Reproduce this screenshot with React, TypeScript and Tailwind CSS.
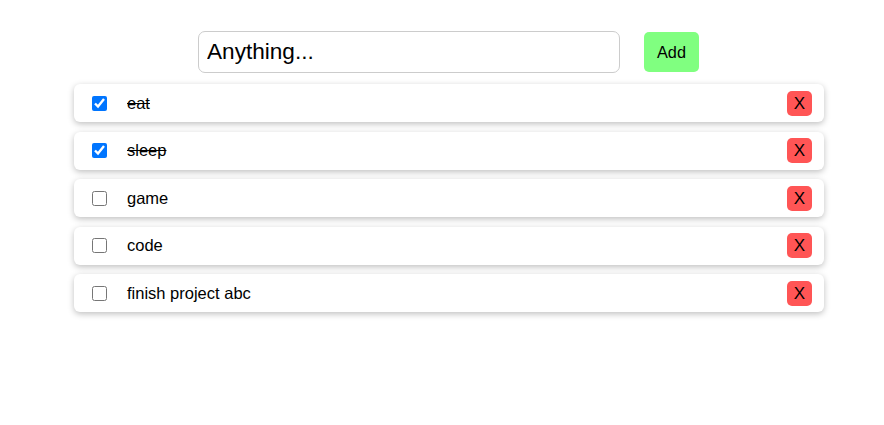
import { useState } from "react";

type Todo = { id: number; text: string; done: boolean };

const initialTodos: Todo[] = [
  { id: 1, text: "eat", done: true },
  { id: 2, text: "sleep", done: true },
  { id: 3, text: "game", done: false },
  { id: 4, text: "code", done: false },
  { id: 5, text: "finish project abc", done: false },
];

export default function App() {
  const [todos, setTodos] = useState<Todo[]>(initialTodos);
  const [value, setValue] = useState("");

  const toggle = (id: number) =>
    setTodos(todos.map((t) => (t.id === id ? { ...t, done: !t.done } : t)));

  const remove = (id: number) => setTodos(todos.filter((t) => t.id !== id));

  const add = () => {
    if (!value.trim()) return;
    setTodos([...todos, { id: Date.now(), text: value, done: false }]);
    setValue("");
  };

  return (
    <div className="min-h-[425px] bg-white font-['Liberation_Sans',Arial,sans-serif] text-black">
      <div className="ml-[74px] w-[750px] pt-[31px]">
        <div className="flex items-center gap-[24px] pl-[124px]">
          <input
            className="h-[42px] w-[422px] rounded-[7px] border border-[#cccccc] px-[8px] text-[22.6px] text-black placeholder:text-black outline-none"
            placeholder="Anything..."
            value={value}
            onChange={(e) => setValue(e.target.value)}
          />
          <button
            className="h-[40px] w-[55px] rounded-[5px] bg-[#80ff80] text-[16.3px]"
            onClick={add}
          >
            Add
          </button>
        </div>
        <ul className="mt-[11px] flex flex-col gap-[9.5px]">
          {todos.map((todo) => (
            <li
              key={todo.id}
              className="flex h-[38px] items-center rounded-[6px] bg-white pl-[18px] pr-[12px] shadow-[0_2px_6px_rgba(0,0,0,0.25)]"
            >
              <input
                type="checkbox"
                checked={todo.done}
                onChange={() => toggle(todo.id)}
                className="m-0 h-[15px] w-[15px] accent-[#0075ff]"
              />
              <span
                className={`ml-[20px] flex-1 text-[16.5px] ${todo.done ? "line-through" : ""}`}
              >
                {todo.text}
              </span>
              <button
                className="flex h-[25px] w-[25px] items-center justify-center rounded-[5px] bg-[#ff5555] text-[17px] leading-none"
                onClick={() => remove(todo.id)}
              >
                X
              </button>
            </li>
          ))}
        </ul>
      </div>
    </div>
  );
}
